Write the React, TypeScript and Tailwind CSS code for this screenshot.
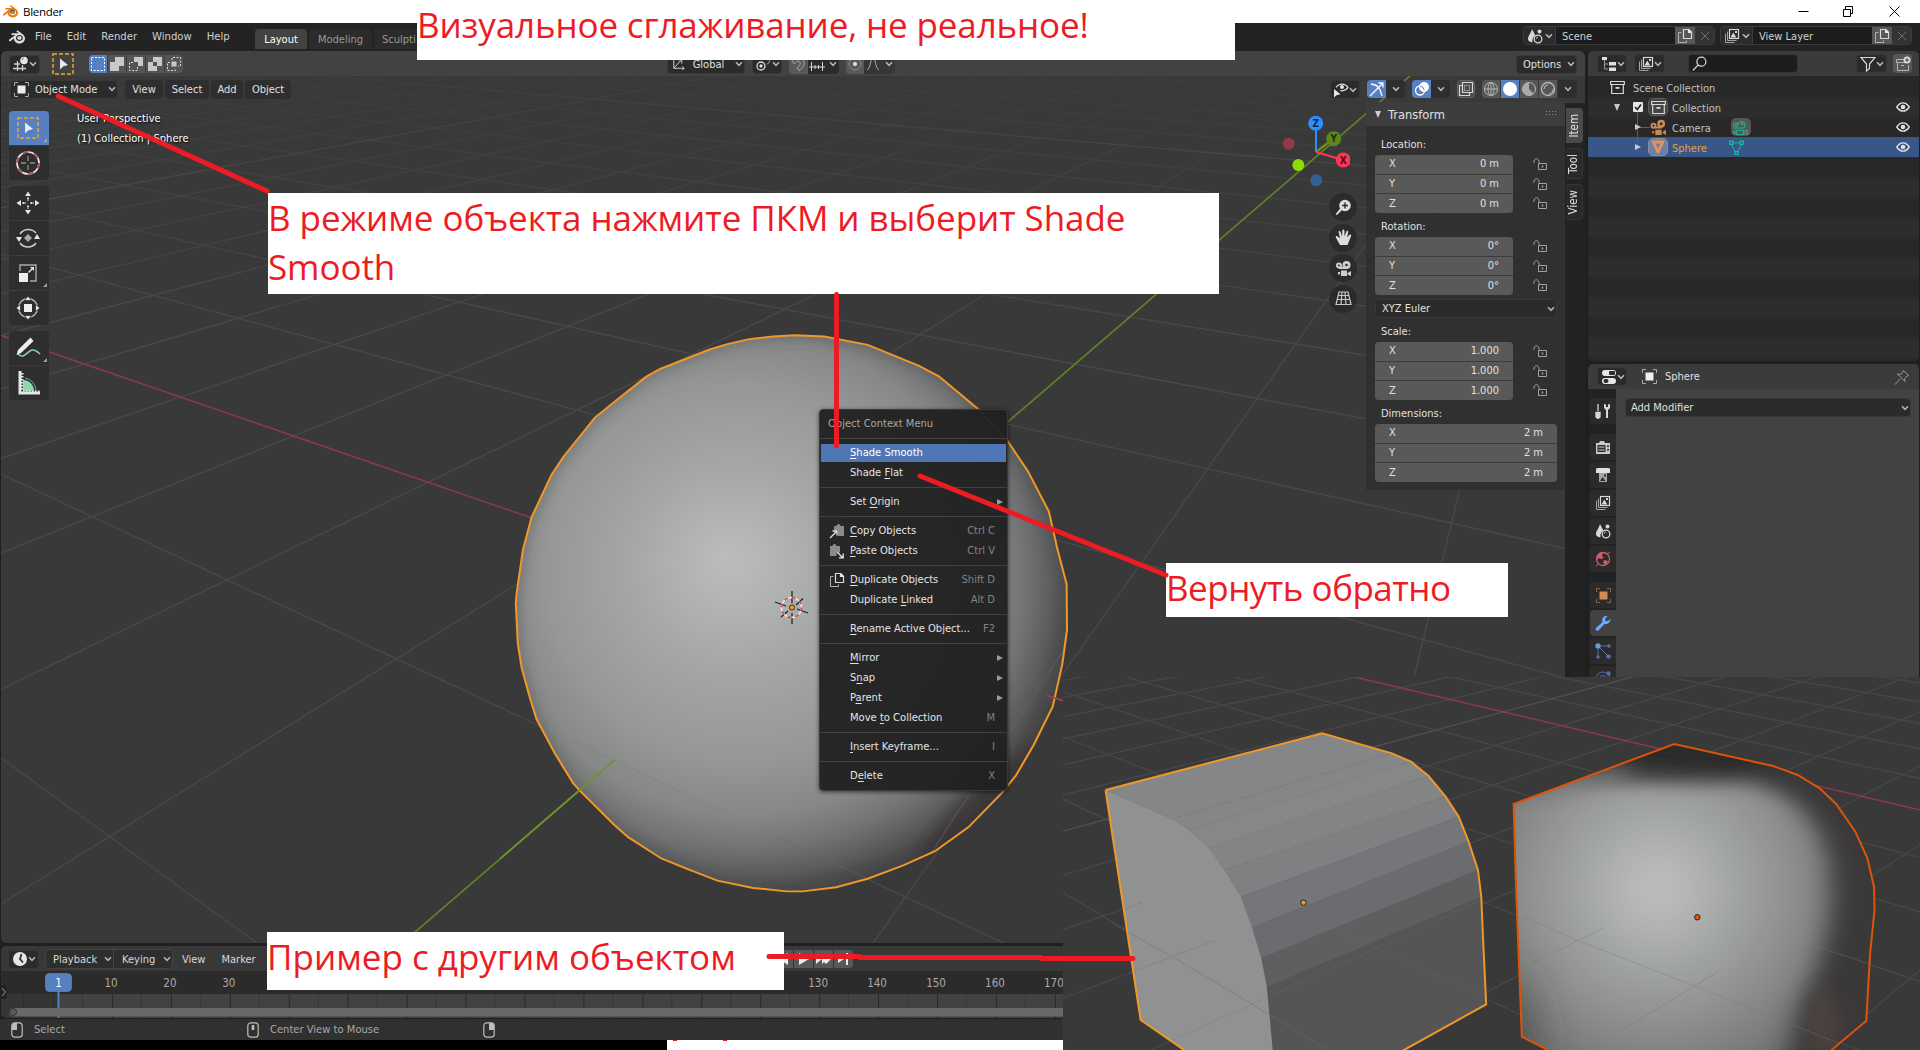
import React from "react";
import { SiBlender } from "react-icons/si";

type P = { children?: React.ReactNode; className?: string };

/* ---------- icons ---------- */

function Chev({ className = "" }: { className?: string }) {
  return (
    <svg className={`shrink-0 ${className}`} width="8" height="6" viewBox="0 0 8 6" fill="none" stroke="#b4b4b4" strokeWidth="1.6">
      <path d="M1 1.2 4 4.4 7 1.2" />
    </svg>
  );
}

function Svg({ children, size = 16, vb = 16, className = "" }: { children: React.ReactNode; size?: number; vb?: number; className?: string }) {
  return (
    <svg className={`shrink-0 ${className}`} width={size} height={size} viewBox={`0 0 ${vb} ${vb}`} fill="none" stroke="#d8d8d8" strokeWidth="1">
      {children}
    </svg>
  );
}

const ObjectIcon = ({ c = "#eeeeee", d = "#a9a9a9" }) => (
  <Svg size={15} vb={15}>
    <rect x="3.5" y="3.5" width="8" height="8" fill={c} stroke="none" />
    <path d="M.5 4V.5H4M11 .5h3.500V4M14.500 11v3.500H11M4 14.500H.5V11" stroke={d} />
  </Svg>
);
const SceneIcon = () => (
  <Svg>
    <path d="M5 1C4 5 1 8 1 11c0 2 2 3.500 4.500 3.300C5 10 7 8 8.500 7.500 7 5 6 3 5 1Z" fill="#d8d8d8" stroke="none" />
    <circle cx="12.500" cy="3.500" r="2" fill="#d8d8d8" stroke="none" />
    <circle cx="11" cy="11" r="3.800" strokeWidth="1.300" />
    <path d="M9 10.500 10.800 9" />
  </Svg>
);
const LayersIcon = () => (
  <Svg>
    <rect x="5.500" y="1.500" width="9" height="9" strokeWidth="1.200" />
    <path d="m6.500 9.500 2.800-5 3 5ZM11 3h2v2h-2z" fill="#d8d8d8" stroke="none" />
    <path d="M3.500 3.500v9h9M1.500 5.500v9h9" stroke="#a5a5a5" />
  </Svg>
);
const CopyIcon = () => (
  <Svg>
    <path d="M6.500 1.500h5l3 3v6h-8zM11.500 1.500v3h3" strokeWidth="1.200" />
    <path d="M11 1h1l3 3v1h-4z" fill="#e8e8e8" stroke="none" />
    <path d="M4.500 4.500h-3v10h8v-2" stroke="#b0b0b0" />
  </Svg>
);
const XIcon = ({ c = "#6f6f6f" }) => (
  <Svg size={10} vb={10}>
    <path d="m1 1 8 8M9 1 1 9" stroke={c} />
  </Svg>
);
const ArchiveIcon = () => (
  <Svg size={15} vb={15}>
    <path d="M.7 1.500h13.600v3H.7zM1.700 4.500v9h11.600v-9" strokeWidth="1.200" />
    <rect x="5.500" y="7" width="4" height="1.800" fill="#d8d8d8" stroke="none" />
  </Svg>
);
const MovieIcon = ({ c = "#d8d8d8", outline = false }) => (
  <Svg size={17} vb={16}>
    {outline ? (
      <g stroke={c} strokeWidth="1">
        <path d="M3.500 9A2.600 2.600 0 1 1 6 5a3.200 3.200 0 1 1 4.500 3.500H3.500M4.500 10.500h6v4h-6zM1.500 11.500h3v2h-3zM10.500 12l4-1.500v4l-4-1.500" />
        <circle cx="4" cy="6.300" r=".8" />
        <circle cx="9.500" cy="4.500" r=".8" />
      </g>
    ) : (
      <g fill={c} stroke="none">
        <path fillRule="evenodd" d="M3.300 3.500a2.800 2.800 0 1 1 0 5.600 2.800 2.800 0 0 1 0-5.600Zm0 1.900a1 1 0 1 0 0 2 1 1 0 0 0 0-2ZM10.500.8a3.700 3.700 0 1 1 0 7.400 3.700 3.700 0 0 1 0-7.400Zm0 2.400a1.300 1.300 0 1 0 0 2.600 1.300 1.300 0 0 0 0-2.600Z" />
        <path d="M4 7h7v2H4zM5 10h6v5H5zM2 11.500h2v2H2zM12 12l3-1.800V15l-3-1.500z" />
      </g>
    )}
  </Svg>
);
const EyeIcon = () => (
  <svg width="14" height="10" viewBox="0 0 14 10" className="shrink-0">
    <path d="M.8 5C3 1.600 5 .9 7 .9S11 1.600 13.200 5C11 8.400 9 9.100 7 9.100S3 8.400.8 5Z" fill="none" stroke="#e0e0e0" strokeWidth="1.400" />
    <circle cx="7" cy="5" r="2.300" fill="#e0e0e0" />
  </svg>
);
const LockIcon = () => (
  <svg width="15" height="13" viewBox="0 0 15 13" fill="none" stroke="#a2a2a2" className="shrink-0">
    <path d="M.8 4.800C.8-.6 6.200-.6 6.200 4.800M5.500 5.500h8v6h-8z" />
    <path d="M9.500 7.500v2" strokeWidth="1.400" />
  </svg>
);
const GridBallIcon = () => (
  <Svg>
    <path d="M1 8h6M0 12.500h13M4.500 5v10M9.500 9v6" stroke="#cfcfcf" strokeWidth="1.300" />
    <circle cx="11" cy="4.500" r="3.800" fill="#e6e6e6" stroke="none" />
    <path d="M9 4a2 2 0 0 1 2-2" stroke="#777" />
  </Svg>
);
const CursorBox = ({ size = 22 }) => (
  <svg width={size} height={size} viewBox="0 0 22 22" className="shrink-0">
    <rect x="1" y="1" width="20" height="20" fill="none" stroke="#f0a431" strokeWidth="1.500" strokeDasharray="4 2" />
    <path d="M8 5.500v11l3-3 5-1.500z" fill="#e9e9e9" />
  </svg>
);
const GlobeWire = () => (
  <Svg>
    <circle cx="8" cy="8" r="6.500" stroke="#b5b5b5" />
    <ellipse cx="8" cy="8" rx="3" ry="6.500" stroke="#b5b5b5" />
    <path d="M1.500 8h13M8 1.500v13" stroke="#b5b5b5" />
  </Svg>
);
const DupIcon = CopyIcon;
const ClipIcon = ({ paste = false }) => (
  <Svg>
    <path d={paste ? "M1 3h2.500a2 2 0 0 1 4 0H11v6.500H7.500V13H1z" : "M5 3h2.500a2 2 0 0 1 4 0H15v10H9V7H5z"} fill="#8b8b8b" stroke="none" />
    <path d={paste ? "M8 9l6 6M14.200 10.500v4.300H10" : "M1 15l6.500-6.500M3.500 8H8v4.500"} strokeWidth="1.300" stroke="#e6e6e6" />
  </Svg>
);

/* ---------- small pieces ---------- */

function Btn({ children, className = "" }: P) {
  return (
    <div className={`flex h-[19px] shrink-0 items-center rounded-[4px] border border-[#383838] bg-[#2b2b2b] ${className}`}>{children}</div>
  );
}

/* ---------- perspective floor grid ---------- */

type Proj = { o: [number, number]; vr: [number, number]; vg: [number, number]; a: number; b: number };

function project(p: Proj, u: number, v: number): [number, number] {
  const s = u * p.a;
  const t = v * p.b;
  const d = 1 + s + t;
  return [(p.o[0] + s * p.vr[0] + t * p.vg[0]) / d, (p.o[1] + s * p.vr[1] + t * p.vg[1]) / d];
}

function gridPath(p: Proj, list: number[], along: "u" | "v", far: number) {
  return list
    .map((k) => {
      const fixed = k * (along === "u" ? p.b : p.a);
      const step = along === "u" ? p.a : p.b;
      const near = (0.12 - 1 - fixed) / step;
      const [x1, y1] = along === "u" ? project(p, near, k) : project(p, k, near);
      const [x2, y2] = along === "u" ? project(p, far, k) : project(p, k, far);
      return `M${x1.toFixed(1)} ${y1.toFixed(1)}L${x2.toFixed(1)} ${y2.toFixed(1)}`;
    })
    .join("");
}

const range = (a: number, b: number, skip: number[]) =>
  Array.from({ length: b - a + 1 }, (_, i) => a + i).filter((n) => !skip.includes(n));

const MAIN: Proj = { o: [792, 608], vr: [-1117, -49], vg: [1599, -86], a: 0.118, b: 0.1805 };
const SIDE: Proj = { o: [1172.4, 956.7], vr: [256, 419], vg: [2585, 419], a: 0.082, b: 0.0965 };

function Viewport() {
  return (
    <svg className="absolute inset-0" width="1584" height="867" viewBox="1 76 1584 867">
      <defs>
        <linearGradient id="fade" gradientUnits="userSpaceOnUse" x1="0" y1="60" x2="0" y2="330">
          <stop offset="0" stopColor="#fff" stopOpacity=".12" />
          <stop offset=".4" stopColor="#fff" stopOpacity=".5" />
          <stop offset="1" stopColor="#fff" />
        </linearGradient>
        <mask id="m1" maskUnits="userSpaceOnUse" x="0" y="70" width="1600" height="880">
          <rect x="0" y="70" width="1600" height="880" fill="url(#fade)" />
        </mask>
        <radialGradient id="ball" gradientUnits="userSpaceOnUse" cx="640" cy="690" r="890" fx="575" fy="625">
          <stop offset="0" stopColor="#bbbdbc" />
          <stop offset=".08" stopColor="#b6b8b7" />
          <stop offset=".3" stopColor="#a5a6a7" />
          <stop offset=".55" stopColor="#969897" />
          <stop offset=".7" stopColor="#868887" />
          <stop offset=".79" stopColor="#727374" />
          <stop offset=".86" stopColor="#5b5c5d" />
          <stop offset=".93" stopColor="#414041" />
          <stop offset="1" stopColor="#373433" />
        </radialGradient>
        <filter id="soft" x="-10%" y="-10%" width="120%" height="120%">
          <feGaussianBlur stdDeviation="14" />
        </filter>
        <path
          id="rim"
          d="M690 43 745 40 820 43 930 65 1060 120 1110 147 1212 235 1285 318 1335 395 1388 500 1410 600 1433 690 1434 810 1422 900 1398 1010 1350 1110 1305 1190 1270 1235 1185 1325 1100 1388 1020 1425 930 1460 850 1482 765 1493 725 1493 640 1484 550 1465 470 1433 408 1407 325 1352 290 1320 200 1228 185 1210 140 1135 92 1042 75 985 55 910 45 845 40 740 42 715 58 600 80 515 130 405 160 358 240 255 300 205 370 148 405 128 530 77 575 63 630 50Z"
        />
        <clipPath id="rimClip">
          <use href="#rim" />
        </clipPath>
      </defs>
      <g mask="url(#m1)" fill="none" stroke="#494949" strokeWidth="1.300">
        <path d={gridPath(MAIN, range(-4, 24, [0, 10]), "u", 60)} />
        <path d={gridPath(MAIN, range(-7, 36, [0, 10]), "v", 60)} />
        <path stroke="#565656" d={gridPath(MAIN, [10, 20], "u", 60) + gridPath(MAIN, [10, 20], "v", 60)} />
      </g>
      <path d="M0 335 1063 700.700" stroke="#8c3a49" strokeWidth="1.500" />
      <path d="M1411 75 400 945" stroke="#5f8226" strokeWidth="1.700" />
      <g transform="translate(500 320) scale(.3954 .3827)">
        <use href="#rim" fill="url(#ball)" />
        <g clipPath="url(#rimClip)">
          <use href="#rim" fill="none" stroke="#4b4a49" strokeOpacity=".45" strokeWidth="20" filter="url(#soft)" />
          <ellipse cx="1240" cy="1290" rx="260" ry="80" fill="#2f2a28" fillOpacity=".4" transform="rotate(-45 1240 1290)" filter="url(#soft)" />
          <path d="M1420 870 980 1568" stroke="#6b6866" strokeOpacity=".5" strokeWidth="3" />
          <path d="M120 1070 660 1330" stroke="#808281" strokeOpacity=".6" strokeWidth="3" />
          <path d="M700 1350 960 1475" stroke="#6a6a6a" strokeOpacity=".4" strokeWidth="3" />
        </g>
        <use href="#rim" fill="none" stroke="#ef972b" strokeWidth="5.200" />
      </g>
      <path d="M500 858.800 614.700 759.700" stroke="#6d942b" strokeWidth="1.700" />
      <path d="m1047 695.500 17 5.500" stroke="#a2414f" strokeWidth="1.400" />
      <g fill="none" strokeWidth="1.300">
        <path d="M792 591v12M792 613v11M775 602l11 4M797 609l11 4M781 617l7-6M796 605l7-6.500" stroke="#222" />
        <circle cx="791.500" cy="607.500" r="10" stroke="#e9e9e9" strokeWidth="1.500" />
        <circle cx="791.500" cy="607.500" r="10" stroke="#d33" strokeWidth="1.500" strokeDasharray="3.900 3.950" />
      </g>
      <circle cx="792" cy="607.500" r="2.600" fill="#f59b25" stroke="#3a2a10" />
    </svg>
  );
}

function Gizmo() {
  return (
    <svg className="absolute left-[1279px] top-[34px]" width="70" height="84" viewBox="1280 110 70 84" fontFamily="DejaVu Sans, sans-serif" fontSize="10" fontWeight="bold" textAnchor="middle">
      <circle cx="1288.700" cy="143.700" r="6" fill="#933a48" />
      <circle cx="1316.300" cy="180.300" r="6" fill="#316093" />
      <path d="m1316 152 17-13" stroke="#66911c" strokeWidth="2.500" />
      <circle cx="1333.700" cy="138.700" r="7.500" fill="#5f861b" />
      <path d="m1316 152 27 8" stroke="#ff3653" strokeWidth="2" />
      <path d="M1316 152v-28" stroke="#2b8fff" strokeWidth="2" />
      <circle cx="1343.300" cy="160" r="7.500" fill="#ff3653" />
      <circle cx="1315.700" cy="123.300" r="7.500" fill="#2b8fff" />
      <circle cx="1298.300" cy="165" r="6" fill="#8bdc00" />
      <text x="1343.300" y="163.600" fill="#45101a">X</text>
      <text x="1333.700" y="142.300" fill="#20300a">Y</text>
      <text x="1315.700" y="127" fill="#0c2b4d">Z</text>
    </svg>
  );
}

function NavButtons() {
  const icons = [
    <g key="z" fill="#dcdcdc" stroke="none">
      <circle cx="10" cy="6.500" r="5.800" />
      <path d="m5.500 9 1.800 1.800L2 16l-1.500-.8z" />
      <path d="M7 6.500h6M10 3.500v6" stroke="#2a2a2a" strokeWidth="1.400" />
    </g>,
    <path key="h" d="M5 16 .8 8.500c-.5-1.500 1.200-2 2-1L5 9.500 3.600 3.300c-.2-1.500 1.600-1.800 2-.4L7 7.500 7.300 1.500c.2-1.500 2-1.500 2.100 0L9.600 7.500l1.700-5c.5-1.300 2.200-.9 1.900.5L12 8.500l2.400-2.700c1-.9 2.300.2 1.700 1.300L12.500 16z" fill="#dcdcdc" stroke="none" />,
    <g key="c" fill="#cfcfcf" stroke="none">
      <path fillRule="evenodd" d="M4 2.500a3 3 0 1 1 0 6 3 3 0 0 1 0-6Zm0 2a1 1 0 1 0 0 2 1 1 0 0 0 0-2ZM11.500 1a4 4 0 1 1 0 8 4 4 0 0 1 0-8Zm0 2.700a1.300 1.300 0 1 0 0 2.600 1.300 1.300 0 0 0 0-2.600Z" />
      <path d="M4 7h8v2H4zM6 10.500h6v5.500H6zM3 12h2v2.500H3zM12.500 13 16 11v5l-3.500-1.500z" />
    </g>,
    <path key="g" d="M4 2h9l3 12.500H1zM3.200 5.500h10.500M2.200 9.500h12.700M7 2l-1 12.500M10 2l1 12.500" stroke="#c6c6c6" strokeWidth="1.200" />,
  ];
  return (
    <div className="absolute left-[1328px] top-[117px] flex flex-col gap-[2.500px]">
      {icons.map((ic, i) => (
        <div key={i} className="flex size-7 items-center justify-center rounded-full bg-[#2a2a2a]/90">
          <Svg size={17} vb={17}>{ic}</Svg>
        </div>
      ))}
    </div>
  );
}

/* ---------- left toolbar ---------- */

function ToolBtn({ children, active = false, more = false }: P & { active?: boolean; more?: boolean }) {
  return (
    <div className={`relative flex h-[34px] w-10 items-center justify-center pr-[2px] ${active ? "bg-[#5680c2]" : "bg-[#2e2e2e]"}`}>
      {children}
      {more && <span className="absolute bottom-[3px] right-[2px] border-b-4 border-l-4 border-b-[#a0a0a0] border-l-transparent" />}
    </div>
  );
}

function Toolbar() {
  return (
    <div className="absolute left-2 top-[35px] flex w-10 flex-col gap-[6px]">
      <div className="flex flex-col gap-px overflow-hidden rounded-[4px]">
        <ToolBtn active more><CursorBox /></ToolBtn>
        <ToolBtn>
          <Svg size={26} vb={26}>
            <circle cx="13" cy="13" r="11" stroke="#e6e6e6" strokeWidth="1.700" />
            <circle cx="13" cy="13" r="11" stroke="#b5494f" strokeWidth="1.700" strokeDasharray="5.700 5.820" />
            <path d="M6 13h5M15 13h5M13 6v5M13 15v5" stroke="#8f8f8f" strokeWidth="1.300" />
          </Svg>
        </ToolBtn>
      </div>
      <div className="flex flex-col gap-px overflow-hidden rounded-[4px]">
        <ToolBtn>
          <Svg size={24} vb={24}>
            <path d="M12 .5 15 5H9zM12 23.500 9 19h6zM.5 12 5 9v6zM23.500 12 19 15V9z" fill="#e6e6e6" stroke="none" />
            <path d="M12 6.500v3M12 14.500v3M6.500 12h3M14.500 12h3" strokeWidth="1.800" stroke="#e6e6e6" strokeDasharray="1.500 .5" />
          </Svg>
        </ToolBtn>
        <ToolBtn>
          <Svg size={24} vb={24}>
            <path d="M4 8A10 10 0 0 1 20 7M20 17A10 10 0 0 1 4 17" strokeWidth="1.500" stroke="#cfcfcf" />
            <path d="M0 11h6l-3 5zM18 13h6l-3-5z" fill="#e6e6e6" stroke="none" />
            <path d="m12 8 4 4-4 4-4-4z" fill="#a9a9a9" stroke="none" />
          </Svg>
        </ToolBtn>
        <ToolBtn more>
          <Svg size={20} vb={20}>
            <path d="M2 8V2h16v16h-6" strokeWidth="1.400" stroke="#a9a9a9" />
            <rect x="1" y="10" width="9" height="9" fill="#eee" stroke="none" />
            <path d="m10.500 9.500 4-4" stroke="#e6e6e6" strokeWidth="1.500" />
            <path d="M12 4h4v4z" fill="#e6e6e6" stroke="none" />
          </Svg>
        </ToolBtn>
        <ToolBtn>
          <Svg size={24} vb={24}>
            <circle cx="12" cy="12" r="9.500" strokeWidth="1.300" stroke="#bdbdbd" />
            <rect x="8" y="8" width="8" height="8" fill="#eee" stroke="none" />
            <path d="m12 0 3.500 4.500h-7zM12 24l-3.500-4.500h7zM0 12l4.500-3.500v7zM24 12l-4.500 3.500v-7z" fill="#e6e6e6" stroke="#2e2e2e" strokeWidth=".8" />
          </Svg>
        </ToolBtn>
      </div>
      <div className="flex flex-col gap-px overflow-hidden rounded-[4px]">
        <ToolBtn more>
          <Svg size={26} vb={26}>
            <path d="M3 19c6 6 9-3 14-4 4-.6 5 2 8 4" stroke="#7fd0a3" strokeWidth="1.600" />
            <path d="M15.500 2.500 18.500 6 6 18l-4.500 2 1.500-5z" fill="#ededed" stroke="none" />
          </Svg>
        </ToolBtn>
        <ToolBtn>
          <Svg size={26} vb={26}>
            <path d="M8 21V10a11 11 0 0 1 11 11z" fill="#8fd8ae" stroke="none" />
            <path d="M10 8a13 13 0 0 1 11 13" stroke="#6db48c" />
            <path d="M5 1v22h20" stroke="#e6e6e6" strokeWidth="3" />
            <path d="M7 3v18" stroke="#e6e6e6" strokeWidth="3" strokeDasharray="1.500 1.500" />
            <path d="M8 21.500h17" stroke="#e6e6e6" strokeWidth="2" strokeDasharray="1.500 1.500" />
          </Svg>
        </ToolBtn>
      </div>
    </div>
  );
}

/* ---------- transform panel ---------- */

function Label({ children }: P) {
  return <div className="flex h-6 items-center pl-[6px] pt-[2px]">{children}</div>;
}

function Fields({ values, lock = true }: { values: string[]; lock?: boolean }) {
  return (
    <div className="flex h-[58px]">
      <div className={`flex flex-col gap-px overflow-hidden rounded-[4px] bg-[#3c3c3c] ${lock ? "w-[138px]" : "w-[182px]"}`}>
        {values.map((v, i) => (
          <div key={i} className="flex flex-1 items-center justify-between bg-[#595959] pb-px pl-[14px] pr-[14px]">
            <span>{"XYZ"[i]}</span>
            <span>{v}</span>
          </div>
        ))}
      </div>
      {lock && (
        <div className="ml-[20px] flex flex-col gap-[6.500px] pt-[3px]">
          {values.map((_, i) => (
            <LockIcon key={i} />
          ))}
        </div>
      )}
    </div>
  );
}

function TransformPanel() {
  return (
    <div className="absolute left-[1365px] top-[26px] h-[388px] w-[199px] bg-[#303030]/90">
      <div className="flex h-6 items-center bg-[#3d3d3d] pl-[9px] pr-[8px]">
        <span className="border-x-[3.500px] border-t-[7px] border-x-transparent border-t-[#cfcfcf]" />
        <span className="ml-[7px] pt-[2px] text-[12.800px]">Transform</span>
        <svg className="ml-auto" width="11" height="6" fill="#8a8a8a">
          {[0, 3, 6, 9].map((x) => (
            <g key={x}>
              <rect x={x} y="0" width="1" height="1" />
              <rect x={x} y="3" width="1" height="1" />
            </g>
          ))}
        </svg>
      </div>
      <div className="pl-[9px] pt-[5px]">
        <Label>Location:</Label>
        <Fields values={["0 m", "0 m", "0 m"]} />
        <Label>Rotation:</Label>
        <Fields values={["0°", "0°", "0°"]} />
        <Btn className="mt-1 h-[18px] w-[182px] justify-between pl-[6px] pr-[1px]">
          XYZ Euler <Chev />
        </Btn>
        <Label>Scale:</Label>
        <Fields values={["1.000", "1.000", "1.000"]} />
        <Label>Dimensions:</Label>
        <Fields lock={false} values={["2 m", "2 m", "2 m"]} />
      </div>
    </div>
  );
}

function SideTabs() {
  const tab = "flex w-[17px] items-center justify-center rounded-r-[4px] text-[11.500px]";
  const t = "rotate-180 [writing-mode:vertical-rl]";
  return (
    <div className="absolute bottom-0 right-0 top-[27px] flex w-5 flex-col gap-[5px] bg-[#232323] pl-px pt-[5px]">
      <div className={`${tab} h-[35px] bg-[#4a4a4a]`}><span className={t}>Item</span></div>
      <div className={`${tab} h-[31px] border border-l-0 border-[#363636] bg-[#292929]`}><span className={t}>Tool</span></div>
      <div className={`${tab} h-[36px] border border-l-0 border-[#363636] bg-[#292929]`}><span className={t}>View</span></div>
    </div>
  );
}

/* ---------- context menu ---------- */

type Item = { label: string; hot?: string; sub?: boolean; icon?: React.ReactNode; active?: boolean } | null;

const MENU: Item[] = [
  { label: "_Shade Smooth", active: true },
  { label: "Shade _Flat" },
  null,
  { label: "Set _Origin", sub: true },
  null,
  { label: "_Copy Objects", hot: "Ctrl C", icon: <ClipIcon /> },
  { label: "_Paste Objects", hot: "Ctrl V", icon: <ClipIcon paste /> },
  null,
  { label: "_Duplicate Objects", hot: "Shift D", icon: <DupIcon /> },
  { label: "Duplicate _Linked", hot: "Alt D" },
  null,
  { label: "_Rename Active Object...", hot: "F2" },
  null,
  { label: "_Mirror", sub: true },
  { label: "S_nap", sub: true },
  { label: "P_arent", sub: true },
  { label: "Move _to Collection", hot: "M" },
  null,
  { label: "_Insert Keyframe...", hot: "I" },
  null,
  { label: "D_elete", hot: "X" },
];

function Sep() {
  return (
    <div className="h-[9px] pt-1">
      <div className="h-px bg-[#414141]" />
    </div>
  );
}

function ContextMenu() {
  return (
    <div className="absolute left-[819px] top-[409px] h-[382px] w-[189px] rounded-[4px] border border-[#3a3a3a] bg-[#202020]/95 pt-1 text-[11.080px] shadow-[0_1px_4px_rgba(0,0,0,0.6)]">
      <div className="flex h-5 items-center pl-2 text-[#a5a5a5]">Object Context Menu</div>
      <Sep />
      {MENU.map((m, i) => {
        if (!m) return <Sep key={i} />;
        const k = m.label.indexOf("_");
        return (
          <div key={i} className={`mx-px flex h-5 items-center border-b border-t border-transparent bg-clip-padding pl-[8px] ${m.active ? "bg-[#5077b5] text-white" : "text-[#e4e4e4]"}`}>
            <span className="mr-[5px] flex w-4">{m.icon}</span>
            <span className="whitespace-pre">
              {m.label.slice(0, k)}
              <span className="underline decoration-1 underline-offset-2">{m.label[k + 1]}</span>
              {m.label.slice(k + 2)}
            </span>
            {m.hot && <span className="ml-auto mr-[11px] text-[#838383]">{m.hot}</span>}
            {m.sub && <span className="ml-auto mr-[3px] border-y-[3.500px] border-l-[6px] border-y-transparent border-l-[#9a9a9a]" />}
          </div>
        );
      })}
    </div>
  );
}

/* ---------- top bars ---------- */

function TitleBar() {
  return (
    <div className="flex h-[23px] items-center bg-white pl-[3px] text-black">
      <span className="relative flex">
        <span className="absolute left-[7px] top-[5px] size-[5px] rounded-full bg-[#265787]" />
        <SiBlender className="relative size-[15px] text-[#e87d0d]" />
      </span>
      <span className="ml-[5px] font-['Open_Sans',sans-serif] text-[11.500px] tracking-[-0.300px] [font-stretch:normal]">Blender</span>
      <svg className="ml-auto mr-[19px]" width="103" height="11" viewBox="0 0 103 11" fill="none" stroke="#000">
        <path d="M.5 5.500h10M45.500 3.500h7v7h-7zM47.500 3.500v-3h7v7h-2M91.500.5l10 10M101.500.5l-10 10" />
      </svg>
    </div>
  );
}

function DataBlock({ icon, name, className = "" }: { icon: React.ReactNode; name: string; className?: string }) {
  return (
    <div className={`flex h-[19px] items-stretch overflow-hidden rounded-[4px] border border-[#3c3c3c] ${className}`}>
      <div className="flex w-[31px] items-center justify-between bg-[#2b2b2b] pl-[3px] pr-[2px]">{icon}<Chev /></div>
      <div className="flex w-[120px] items-center border-l border-[#3c3c3c] bg-[#1c1c1c] pl-[6px] pt-px">{name}</div>
      <div className="flex w-[20px] items-center justify-center bg-[#575757]"><CopyIcon /></div>
      <div className="flex w-[19px] items-center justify-center bg-[#333]"><XIcon /></div>
    </div>
  );
}

function TopBar() {
  return (
    <div className="flex h-[28px] bg-[#232323] text-[#d0d0d0]">
      <SiBlender className="ml-[9px] mt-[6px] size-[16px] shrink-0 text-[#dcdcdc]" />
      <div className="ml-[10px] flex h-[26px] w-[220px] items-center gap-[15px] pt-px text-[11.200px]">
        {["File", "Edit", "Render", "Window", "Help"].map((t) => (
          <span key={t}>{t}</span>
        ))}
      </div>
      <div className="flex items-end gap-[2px] pb-[2px]">
        <span className="flex h-5 w-[52px] items-center justify-center rounded-t-[4px] bg-[#424242] pt-px text-white">Layout</span>
        <span className="flex h-5 w-[63px] items-center justify-center rounded-t-[4px] bg-[#2b2b2b] pt-px text-[#999]">Modeling</span>
        <span className="flex h-5 w-[43px] items-center overflow-hidden rounded-tl-[4px] bg-[#2b2b2b] pl-2 pt-px text-[#999]">Sculpti</span>
      </div>
      <div className="ml-auto mr-2 flex gap-[5px] pt-[3px]">
        <DataBlock icon={<SceneIcon />} name="Scene" />
        <DataBlock icon={<LayersIcon />} name="View Layer" />
      </div>
    </div>
  );
}

function SelectModes() {
  const base = "flex h-[18px] w-[18px] items-center justify-center";
  const c = "#c9c9c9";
  return (
    <div className="ml-[15px] flex gap-px overflow-hidden rounded-[4px] bg-[#3a3a3a]">
      <div className={`${base} bg-[#5680c2]`}><Svg><rect x="1.500" y="1.500" width="13" height="13" stroke="#fff" strokeDasharray="2 1.500" /></Svg></div>
      <div className={`${base} bg-[#555]`}><Svg><path d="M6 1h9v9h-5v5H1V6h5z" fill={c} stroke="none" /></Svg></div>
      <div className={`${base} bg-[#555]`}><Svg><path d="M6 1h9v9h-5V6H6z" fill={c} stroke="none" /><path d="M5 6.500H1.500v8h8V11" strokeDasharray="2 1.500" /></Svg></div>
      <div className={`${base} bg-[#555]`}><Svg><path fillRule="evenodd" d="M6 1h9v9h-5v5H1V6h5zM6 6v4h4V6z" fill={c} stroke="none" /></Svg></div>
      <div className={`${base} bg-[#555]`}><Svg><rect x="5.500" y="5.500" width="5" height="5" fill={c} stroke="none" /><path d="M6 4V1.500h8.500v8.500H12M4 6.500H1.500v8h8V12" strokeDasharray="2 1.500" /></Svg></div>
    </div>
  );
}

function ToolHeader() {
  return (
    <div className="flex h-[25px] items-center rounded-t-[5px] bg-[#424242] pl-2 pr-2 pt-px">
      <Btn className="w-[31px] justify-between pl-[3px] pr-[2px]"><GridBallIcon /><Chev /></Btn>
      <div className="ml-3 flex"><CursorBox /></div>
      <SelectModes />
      <div className="ml-[484px] flex items-center gap-[7px]">
        <Btn className="w-[78px] justify-between pl-[3px] pr-[1px]">
          <Svg size={15} vb={16}><path d="M3 1v11h11M3 12l8-9M1 3l2-2 2 2M12 10l2 2-2 2M7.500 3h4v4" /></Svg>
          <span className="-translate-x-[2px]">Global</span>
          <Chev />
        </Btn>
        <Btn className="w-[30px] justify-between pl-[2px] pr-[1px]">
          <Svg><circle cx="6" cy="10" r="4" strokeWidth="1.300" /><circle cx="6" cy="10" r="1.200" fill="#fff" /><path d="M11 2a3 3 0 1 1 1 6" stroke="#999" /></Svg>
          <Chev />
        </Btn>
        <div className="flex h-[19px] overflow-hidden rounded-[4px]">
          <span className="flex w-[19px] items-center justify-center bg-[#595959]"><Svg><path d="M1.500 6A6 6 0 0 1 11 3c4 4 2 8-3 11.500l-2-2.500c3-2 4-4.500 2.500-6.200C7 4.500 5 5.500 3.500 8z" stroke="#aaa" /></Svg></span>
          <span className="flex w-[31px] items-center justify-between bg-[#2b2b2b] pl-px pr-[2px]"><Svg><path d="M2.500 6v9M6 9v4M9.500 9v4M13.500 6v9M0 11h16" /></Svg><Chev /></span>
        </div>
        <div className="flex h-[19px] overflow-hidden rounded-[4px]">
          <span className="flex w-[18px] items-center justify-center bg-[#595959]"><Svg><circle cx="8" cy="8" r="6" stroke="#888" /><circle cx="8" cy="8" r="1.700" fill="#ddd" /></Svg></span>
          <span className="flex w-[31px] items-center justify-between bg-[#363636] pl-px pr-[2px]"><Svg><path d="M2 14C6 12 5 2 8 2s2 10 6 12" stroke="#aaa" /></Svg><Chev /></span>
        </div>
      </div>
      <Btn className="ml-auto w-[61px] justify-between pl-[6px] pr-[1px]">Options <Chev /></Btn>
    </div>
  );
}

function ModeHeader() {
  const on = "flex w-[19px] items-center justify-center bg-[#5680c2]";
  const off = "flex w-[18px] items-center justify-center bg-[#575757]";
  const drop = "flex w-[19px] items-center justify-center bg-[#2e2e2e]";
  const text = "flex h-[19px] items-center justify-center rounded-[4px] bg-[#2e2e2e]";
  return (
    <div className="absolute inset-x-0 top-[4px] flex h-[18px] items-center pl-[9px] pr-[8px]">
      <Btn className="h-[18px] w-[108px] pl-[3px] pr-[1px]">
        <ObjectIcon />
        <span className="ml-[6px]">Object Mode</span>
        <Chev className="ml-auto" />
      </Btn>
      <div className="ml-[7px] flex gap-[2px]">
        <span className={`${text} w-[38px]`}>View</span>
        <span className={`${text} w-[44px]`}>Select</span>
        <span className={`${text} w-[32px]`}>Add</span>
        <span className={`${text} w-[46px]`}>Object</span>
      </div>
      <div className="ml-auto flex h-[18px] gap-[7px]">
        <Btn className="h-[18px] w-[30px] justify-between pl-[2px] pr-[2px]">
          <Svg><path d="M1 7v8.500l2.500-2.300 4-1z" fill="#e6e6e6" stroke="none" /><path d="M3 5.500C6 1 12 1 15 5.500 12 9.500 8 9 7 8.500" strokeWidth="1.300" /><circle cx="9" cy="5" r="2" fill="#e6e6e6" stroke="none" /></Svg>
          <Chev />
        </Btn>
        <div className="flex overflow-hidden rounded-[4px]">
          <span className={on}><Svg><path d="M2 3c8 1 9 5 11 12M1 15 13 3M9.500 2H14v4.500" stroke="#fff" strokeWidth="1.300" /></Svg></span>
          <span className={drop}><Chev /></span>
        </div>
        <div className="flex overflow-hidden rounded-[4px]">
          <span className={on}><Svg><circle cx="6" cy="9.500" r="4.500" stroke="#fff" strokeWidth="1.300" /><circle cx="10" cy="6" r="5" fill="#fff" stroke="none" /><path d="M6 5.200A4.500 4.500 0 0 1 10.300 9" stroke="#5680c2" /></Svg></span>
          <span className={drop}><Chev /></span>
        </div>
        <div className="flex w-[18px] items-center justify-center rounded-[4px] border border-[#666] bg-[#4a4a4a]">
          <Svg><path d="M4.500 1.500h10v10h-10zM4 4.500H1.500v10h10V12" strokeWidth="1.200" /><path d="M6.500 4.500h5v5h-5z" strokeDasharray="1 1" /></Svg>
        </div>
        <div className="flex gap-px overflow-hidden rounded-[4px]">
          <span className={off}><GlobeWire /></span>
          <span className="flex w-[18px] items-center justify-center bg-[#5680c2]"><Svg><circle cx="8" cy="8" r="7" fill="#fff" stroke="none" /></Svg></span>
          <span className={off}><Svg><circle cx="8" cy="8" r="6.500" stroke="#bbb" /><path d="M8 8V1.500A6.500 6.500 0 0 0 1.500 8a6.500 6.500 0 0 0 11 4.700z" fill="#aaa" stroke="none" /></Svg></span>
          <span className={off}><Svg><circle cx="8" cy="8" r="6.500" stroke="#bbb" strokeWidth="1.300" /><path d="M4 8a4 4 0 0 1 4-4M9 13c2-.5 4-2 4.300-5" stroke="#bbb" /></Svg></span>
          <span className={drop}><Chev /></span>
        </div>
      </div>
    </div>
  );
}

/* ---------- outliner ---------- */

function Row({ children, className = "" }: P) {
  return <div className={`flex h-5 shrink-0 items-center ${className}`}>{children}</div>;
}

const Tri = () => (
  <svg width="6" height="6" viewBox="0 0 6 6" className="relative shrink-0">
    <path d="M0 0v6l6-3z" fill="#c9c9c9" />
  </svg>
);

function Outliner() {
  return (
    <div className="flex h-[310px] flex-col overflow-hidden rounded-[5px] bg-[#282828] text-[#c3c3c3]">
      <div className="flex h-[25px] shrink-0 items-center bg-[#3b3b3b] pl-[9px]">
        <Btn className="w-[30px] justify-between pl-[3px] pr-[2px]">
          <Svg><path d="M1 1h5v3H1zM8 6h7v3.500H8zM8 11.500h7V15H8z" fill="#e0e0e0" stroke="none" /><path d="M3.500 4v9H7M3.500 8H7" stroke="#999" /></Svg>
          <Chev />
        </Btn>
        <Btn className="ml-[7px] w-[31px] justify-between pl-[3px] pr-[2px]"><LayersIcon /><Chev /></Btn>
        <div className="ml-[23px] flex h-[19px] w-[110px] items-center rounded-[4px] border border-[#343434] bg-[#1d1d1d] pl-[3px]">
          <Svg size={15}><circle cx="10" cy="6" r="4.800" strokeWidth="1.300" /><path d="m6.500 9.500-5.500 6" strokeWidth="1.300" /></Svg>
        </div>
        <Btn className="ml-[58px] w-[31px] justify-between pl-[3px] pr-[2px]">
          <Svg><path d="M1 1.500h14L9.500 8v4.500L6.500 15V8z" strokeWidth="1.200" /></Svg>
          <Chev />
        </Btn>
        <div className="ml-[6px] flex size-[19px] items-center justify-center rounded-[4px] bg-[#575757]">
          <Svg><path d="M9 3.500H1.500v3H11M2.500 6.500v8h11V9M6 9.500h3" stroke="#b5b5b5" /><circle cx="12" cy="4" r="3.500" fill="#ddd" stroke="none" /><path d="M10 4h4M12 2v4" stroke="#444" /></Svg>
        </div>
      </div>
      <div className="flex h-[21px] shrink-0 items-center pl-[22px] pt-[2px]"><ArchiveIcon /><span className="ml-[8px] pt-px">Scene Collection</span></div>
      <Row className="bg-[#2d2d2d] pl-[26px] pr-[9px]">
        <span className="border-x-[3px] border-t-[7px] border-x-transparent border-t-[#c9c9c9]" />
        <svg className="ml-[13px]" width="10" height="10"><rect width="10" height="10" rx="1" fill="#e6e6e6" /><path d="m2 5 2.300 2.500L8 2.500" stroke="#222" strokeWidth="1.700" fill="none" /></svg>
        <span className="ml-[5px] flex h-[18px] w-5 items-center justify-center rounded-[5px] border border-[#5c5c5c] bg-[#454545]"><ArchiveIcon /></span>
        <span className="ml-1 pt-[2px]">Collection</span>
        <span className="ml-auto"><EyeIcon /></span>
      </Row>
      <Row className="relative pl-[47px] pr-[9px]">
        <span className="absolute left-[49px] top-[-5px] h-[36px] w-px bg-[#5e5e5e]" />
        <span className="absolute left-[49px] top-[10px] h-px w-[13px] bg-[#5e5e5e]" />
        <Tri />
        <span className="ml-[9px] flex"><MovieIcon c="#c98953" /></span>
        <span className="ml-[5px] pt-[2px]">Camera</span>
        <span className="ml-[20px] flex h-[18px] w-5 items-center justify-center rounded-[5px] bg-[#575757]"><MovieIcon c="#1cb292" outline /></span>
        <span className="ml-auto"><EyeIcon /></span>
      </Row>
      <Row className="bg-[#395689] pl-[47px] pr-[9px]">
        <Tri />
        <span className="ml-[7px] flex h-[18px] w-5 items-center justify-center rounded-[5px] border border-[#8290ab] bg-[#6f7f9f]">
          <Svg><path fillRule="evenodd" d="M1 1.500h14L9 14.500H7zM5.500 4.500 8 10l2.500-5.500z" fill="#dd9363" stroke="none" /></Svg>
        </span>
        <span className="ml-1 pt-[2px] text-[#e8a13d]">Sphere</span>
        <span className="ml-[22px] flex"><Svg size={15}><path d="M3 3h10M2.500 4.500 7 13M13.500 4.500 9 13" stroke="#13c0a0" /><path d="M.8 1.300h3.400v3.400H.8zM11.800 1.300h3.400v3.400h-3.400zM6.300 12.300h3.400v3.400H6.300z" stroke="#13c0a0" strokeWidth="1.300" fill="#395689" /></Svg></span>
        <span className="ml-auto"><EyeIcon /></span>
      </Row>
      <div className="flex-1 bg-[repeating-linear-gradient(#282828_0_20px,#2d2d2d_20px_40px)]" />
    </div>
  );
}

/* ---------- properties ---------- */

const PROP_ICONS: React.ReactNode[] = [
  <Svg key="0"><path d="M3 1v7M1 9.500h4V14l-2 1.500L1 14z" fill="#d8d8d8" strokeWidth="1.300" /><path d="M9 1v4l2 2v8h2V7l2-2V1l-2 .5V4h-2V1.500z" fill="#d8d8d8" stroke="none" /></Svg>,
  <Svg key="1"><path fillRule="evenodd" d="M1 4h3l1-2h4l1 2h5v11H1zM2.500 6v7h8V6z" fill="#c9c9c9" stroke="none" /><path d="M3.500 8h6M3.500 11h6" stroke="#9a9a9a" strokeWidth="1.500" /><path d="M13 6.500v1.500M13 10v1.500" stroke="#2b2b2b" strokeWidth="2" /></Svg>,
  <Svg key="2"><path d="M1 2.500Q1 1 2.500 1h11Q15 1 15 2.500V6H1z" fill="#e0e0e0" stroke="none" /><path d="M4 6h8v9H4z" fill="#a5a5a5" stroke="none" /><path d="m5 14 2.500-4 3 4zM9 7.500h2v2H9z" fill="#2b2b2b" stroke="none" /></Svg>,
  <LayersIcon key="3" />,
  <SceneIcon key="4" />,
  <Svg key="5"><circle cx="8" cy="8" r="6.500" stroke="#c9606a" strokeWidth="1.300" /><path d="M2 5c2-4 6-4 6-3L7 5 9 7 6 8 4 7 2 9zM9 9l4 1-2 4-3-2z" fill="#c9606a" stroke="none" /><path d="M12 3l3-2M1 15l2.500-2" stroke="#c9606a" /></Svg>,
  <ObjectIcon key="6" c="#cf8b52" d="#8e6544" />,
  <Svg key="7"><path d="M1 13 7.500 7A4.300 4.300 0 0 1 12.500 1L10 4l.5 2L13 6l2.300-2A4.500 4.500 0 0 1 9.500 9L3.500 15.500A1.800 1.800 0 0 1 1 13Z" fill="#6da7ff" stroke="none" /></Svg>,
  <Svg key="8"><circle cx="3" cy="3" r="2.700" fill="#6f9bdb" stroke="none" /><path d="M5 3h9M3 5v9M5 5l8 8" stroke="#55749f" /><circle cx="14" cy="3" r="1.700" fill="#55749f" stroke="none" /><circle cx="3" cy="14" r="1.700" fill="#55749f" stroke="none" /><circle cx="13.500" cy="13.500" r="2.300" fill="#55749f" stroke="none" /></Svg>,
  <Svg key="9"><circle cx="8" cy="8" r="7" stroke="#55749f" /><circle cx="8" cy="8" r="3.500" stroke="#55749f" /><circle cx="13.500" cy="2.500" r="2.200" fill="#55749f" stroke="none" /></Svg>,
];

function Properties() {
  return (
    <div className="mt-[3px] flex flex-1 flex-col overflow-hidden rounded-t-[5px]">
      <div className="flex h-[25px] shrink-0 items-center bg-[#3b3b3b] pl-[9px] pr-[9px]">
        <Btn className="w-[30px] justify-between pl-[3px] pr-[2px]">
          <Svg><rect x="1" y="1" width="14" height="6" rx="3" fill="#e6e6e6" stroke="none" /><rect x="8" y="2" width="6" height="4" rx="1" fill="#2b2b2b" stroke="none" /><rect x="1" y="9" width="14" height="6" rx="3" fill="#e6e6e6" stroke="none" /><rect x="2.500" y="10" width="5" height="4" rx="2" fill="#2b2b2b" stroke="none" /></Svg>
          <Chev />
        </Btn>
        <span className="ml-[15px] flex"><ObjectIcon /></span>
        <span className="ml-[8px]">Sphere</span>
        <span className="ml-auto"><Svg><path d="m9.500 1.500 5 5-1.500.5-2.500 2.500.5 3-7.500-7.500 3 .5L9 3zM6 10l-5 5.500" stroke="#999" /></Svg></span>
      </div>
      <div className="flex flex-1 overflow-hidden bg-[#424242]">
        <div className="flex w-7 shrink-0 flex-col gap-[2px] bg-[#222] pl-[2px] pt-[9px]">
          {PROP_ICONS.map((ic, i) => (
            <div
              key={i}
              className={`flex h-[26px] shrink-0 items-center justify-center rounded-l-[4px] ${i === 7 ? "bg-[#424242]" : "bg-[#2b2b2b]"} ${i === 1 || i === 6 ? "mt-2" : ""}`}
            >
              {ic}
            </div>
          ))}
        </div>
        <Btn className="ml-[9px] mt-[9px] w-[286px] justify-between pl-[5px] pr-[1px]">Add Modifier <Chev /></Btn>
      </div>
    </div>
  );
}

/* ---------- timeline ---------- */

function Timeline() {
  const frames = Array.from({ length: 17 }, (_, i) => (i + 1) * 10);
  return (
    <div className="relative ml-px mt-[3px] h-[72px] w-[1584px] overflow-hidden rounded-[5px] bg-[#2b2b2b]">
      <div className="flex h-[25px] items-center bg-[#383838] pl-[7px] pt-px text-[#d8d8d8]">
        <Btn className="w-[31px] justify-between pl-[3px] pr-[2px]">
          <Svg><circle cx="8" cy="8" r="7" fill="#e6e6e6" stroke="none" /><path d="M9.500 3 8 8l3 3.500" stroke="#333" strokeWidth="1.800" /></Svg>
          <Chev />
        </Btn>
        <div className="ml-[6px] flex h-[20px] items-center rounded-[4px] border border-[#444] bg-[#2e2e2e]">
          <span className="flex h-full w-[68px] items-center justify-between border-r border-[#444] pl-[7px] pr-[1px]">Playback <Chev /></span>
          <span className="flex h-full w-[58px] items-center justify-between pl-[8px] pr-[1px]">Keying <Chev /></span>
        </div>
        <span className="ml-[9px]">View</span>
        <span className="ml-[16px]">Marker</span>
        <div className="ml-[518px] flex h-[18px] gap-px overflow-hidden rounded-r-[4px] bg-[#333]">
          {["M13 2v12L4 8z", "M4 2v12L14 8z", "M1 3v10L7 8v5l2-2 2 2 5-5-5-5-2 5-2-5z", "M3 4v8l6-4zM11 2h2v12h-2z"].map((d) => (
            <span key={d} className="flex w-[19px] items-center justify-center bg-[#585858]"><Svg><path d={d} fill="#eee" stroke="none" /></Svg></span>
          ))}
        </div>
      </div>
      <svg className="block" width="1584" height="47" viewBox="1 971 1584 47">
        <rect x="1" y="994" width="57" height="24" fill="#353535" />
        <rect x="58" y="994" width="1530" height="24" fill="#424242" />
        <path d={frames.map((f) => `M${112.5 + (f / 10 - 1) * 58.93} 994v24`).join("")} stroke="#2a2a2a" />
        <path d={frames.map((f) => `M${82.5 + (f / 10 - 1) * 58.93} 994v24`).join("")} stroke="#383838" />
        <path d="M23.500 994v24M53.500 994v24" stroke="#2d2d2d" />
        <rect x="57.500" y="990" width="2" height="28" fill="#5680c2" />
        <rect x="9" y="1008" width="1600" height="8.500" rx="4" fill="#696969" />
        <circle cx="13" cy="1012" r="3.500" fill="#5a5a5a" stroke="#333" />
        <rect x="45.500" y="973.500" width="26" height="18" rx="4" fill="#5680c2" stroke="#6a90cc" strokeWidth=".6" />
        <rect x="1" y="985" width="6" height="14" rx="2" fill="#222" />
        <path d="m2 988 3.500 4L2 996" fill="none" stroke="#999" />
        <g fill="#aaa" fontSize="11.500" fontFamily="DejaVu Sans Condensed, DejaVu Sans, sans-serif" textAnchor="middle">
          <text x="58.500" y="987" fill="#fff">1</text>
          {frames
            .filter((f) => f <= 30 || f >= 130)
            .map((f) => (
              <text key={f} x={111 + (f / 10 - 1) * 58.93} y="987">{f}</text>
            ))}
        </g>
      </svg>
    </div>
  );
}

function Mouse({ d }: { d: string }) {
  return (
    <svg width="12" height="16" viewBox="0 0 12 16" fill="none" stroke="#bdbdbd" className="shrink-0">
      <rect x=".8" y=".8" width="10.400" height="14.400" rx="3" strokeWidth="1.200" />
      <path d={d} fill="#bdbdbd" stroke="none" />
    </svg>
  );
}

function StatusBar() {
  return (
    <div className="mt-px flex h-[21px] items-center bg-[#303030] pl-[11px] pt-px text-[11.100px] text-[#a8a8a8]">
      <div className="flex w-[236px] items-center gap-[11px]"><Mouse d="M1 8V4q0-3 3-3h2v7z" />Select</div>
      <div className="flex w-[236px] items-center gap-[11px]"><Mouse d="M4.700 3h2.600v5H4.700z" />Center View to Mouse</div>
      <Mouse d="M11 8V4q0-3-3-3H6v7z" />
    </div>
  );
}

/* ---------- flat / smooth example ---------- */

const L = [[205, 447], [235, 480], [272, 535], [300, 600], [330, 680], [350, 772], [367, 865], [377, 950]];
const R = [[605, 250], [640, 275], [672, 318], [703, 380], [727, 440], [745, 515], [762, 600], [768, 680]];
const STRIPS = ["#858786", "#868787", "#838486", "#7f8082", "#75767a", "#6b6c6f", "#5f5f5f"];

function Example() {
  return (
    <svg className="absolute left-[1063px] top-[677px] bg-[#393939]" width="857" height="373" viewBox="1063 677 857 373">
      <defs>
        <radialGradient id="glow" gradientUnits="userSpaceOnUse" cx="0" cy="0" r="1" gradientTransform="translate(1090 655) scale(370 620)">
          <stop offset="0" stopColor="#bdbfbe" />
          <stop offset=".12" stopColor="#b7b9b8" />
          <stop offset=".4" stopColor="#a1a3a3" />
          <stop offset=".7" stopColor="#8a8c8b" />
          <stop offset="1" stopColor="#6f7170" />
        </radialGradient>
        <filter id="b1" x="-20%" y="-20%" width="140%" height="140%"><feGaussianBlur stdDeviation="24 26" /></filter>
        <filter id="b2" x="-40%" y="-20%" width="180%" height="140%"><feGaussianBlur stdDeviation="16 24" /></filter>
        <filter id="b3" x="-150%" y="-80%" width="400%" height="260%"><feGaussianBlur stdDeviation="40 70" /></filter>
        <path id="smooth" d="M827 402 1120 222 1300 288 1345 315 1385 355 1415 402 1450 485 1472 565 1484 650 1485 720 1477 850 1470 1052 1405 1142H892L842 1100 832 680Z" />
        <clipPath id="smoothClip"><use href="#smooth" /></clipPath>
      </defs>
      <g fill="none" stroke="#484848" strokeWidth="1.200">
        <path d={gridPath(SIDE, range(-5, 22, [6]), "u", 30)} />
        <path d={gridPath(SIDE, range(-7, 12, [3]), "v", 30)} />
        <path stroke="#525252" d={gridPath(SIDE, [3], "v", 30)} />
      </g>
      <path d="M1353.400 676.700 1920 810" stroke="#8c3a49" strokeWidth="1.500" />
      <g transform="translate(1060 670) scale(.5485 .33333)">
        <path d="M83 360 478 190 605 250 762 600 777 1003 625 1142H228L147 1050Z" fill="#555" />
        <path d="M377 950 768 680 777 1003 625 1142H388Z" fill="#555" />
        <path d="M83 360 478 190 605 250 205 447Z" fill="#858688" />
        {STRIPS.map((c, i) => (
          <path key={i} d={`M${L[i]}L${R[i]}L${R[i + 1]}L${L[i + 1]}Z`} fill={c} stroke={c} strokeWidth=".6" />
        ))}
        <path d="M83 360 205 447 235 480 272 535 300 600 330 680 350 772 367 865 377 950 388 1142H228L147 1050Z" fill="#909291" />
        <g fill="none" stroke="#6f706f" strokeOpacity=".5" strokeWidth="2">
          <path d="M115 720 150 697M95 760 205 860 350 1003 490 1142M125 910 280 812" />
          <path d="M205 1110 350 1003 575 837 765 690M515 790 575 837 775 975" strokeOpacity=".35" />
        </g>
        <path d="M83 360 478 190 605 250 640 275 672 318 703 380 727 440 745 515 762 600 768 680 772 830 777 1003 625 1142M228 1142 147 1050 83 360" fill="none" stroke="#ef972b" strokeWidth="2" vectorEffect="non-scaling-stroke" />
        <g clipPath="url(#smoothClip)">
          <rect x="800" y="200" width="700" height="950" fill="#3a3839" />
          <path d="M1000 180h180l160 90-120 30-250-30z" fill="#2a2a2c" filter="url(#b2)" />
          <path d="M700 440 760 385 940 328 1130 340 1270 338 1340 395 1382 480 1402 570 1406 690 1398 790 1378 900 1345 1020 1310 1260H700Z" fill="url(#glow)" filter="url(#b1)" />
          <path d="M800 400 1000 290 1060 300 1010 340 900 390Z" fill="#7b7d7c" fillOpacity=".7" filter="url(#b2)" />
          <ellipse cx="815" cy="1150" rx="45" ry="230" fill="#3c3e3d" fillOpacity=".75" filter="url(#b3)" />
          <ellipse cx="1392" cy="1060" rx="26" ry="110" fill="#4f4640" fillOpacity=".8" filter="url(#b2)" />
          <g fill="none" stroke="#777978" strokeOpacity=".5" strokeWidth="2">
            <path d="M990 775 860 880M845 740 945 812 1157 948 1420 1120M1200 905 1020 1085M1365 822 1485 887" />
          </g>
        </g>
        <path d="M892 1142 842 1100 832 680 827 402 1120 222 1300 288 1345 315 1385 355 1415 402 1450 485 1472 565 1484 650 1485 720 1477 850 1470 1052 1405 1142" fill="none" stroke="#dd5309" strokeWidth="2" vectorEffect="non-scaling-stroke" />
      </g>
      <circle cx="1303.500" cy="902.700" r="2.700" fill="#f59b25" stroke="#222" />
      <circle cx="1697.300" cy="917.300" r="2.700" fill="#e8560b" stroke="#222" />
    </svg>
  );
}

/* ---------- notes over the window ---------- */

function Note({ children, className = "" }: P) {
  return (
    <div className={`absolute whitespace-nowrap bg-white font-['Open_Sans','Noto_Sans',sans-serif] text-[35px] leading-[49px] text-[#ed1c24] [font-stretch:normal] ${className}`}>
      {children}
    </div>
  );
}

export default function App() {
  return (
    <div className="relative h-[1050px] w-[1920px] overflow-hidden bg-black font-['DejaVu_Sans_Condensed','DejaVu_Sans',sans-serif] text-[11px] leading-none text-[#e0e0e0] [font-stretch:condensed]">
      <div className="flex h-[1040px] flex-col bg-[#1f1f1f]">
        <TitleBar />
        <TopBar />
        <div className="flex h-[892px]">
          <div className="ml-px flex w-[1584px] flex-col overflow-hidden rounded-[5px]">
            <ToolHeader />
            <div className="relative flex-1 bg-[#393939]">
              <Viewport />
              <ModeHeader />
              <div className="absolute left-[76px] top-[33px] text-[11.100px] leading-5 text-white [text-shadow:1px_1px_2px_#000]">
                <p>User Perspective</p>
                <p>(1) Collection | Sphere</p>
              </div>
              <Toolbar />
              <Gizmo />
              <NavButtons />
              <SideTabs />
              <TransformPanel />
            </div>
          </div>
          <div className="ml-[3px] flex h-[626px] w-[331px] flex-col">
            <Outliner />
            <Properties />
          </div>
        </div>
        <Timeline />
        <StatusBar />
      </div>
      <div className="absolute left-[667px] top-[1040px] h-[10px] w-[396px] bg-white">
        <span className="absolute left-[6px] top-0 h-px w-[4px] bg-[#ed1c24]" />
        <span className="absolute left-[56px] top-0 h-px w-[4px] bg-[#ed1c24]" />
      </div>
      <Example />
      <ContextMenu />
      <Note className="left-[417px] top-0 h-[60px] w-[818px] tracking-[-0.140px]"><p>Визуальное сглаживание, не реальное!</p></Note>
      <Note className="left-[268px] top-[193px] h-[101px] w-[951px] tracking-[-0.080px]">
        <p>В режиме объекта нажмите ПКМ и выберит Shade</p>
        <p>Smooth</p>
      </Note>
      <Note className="left-[1166px] top-[563px] h-[54px] w-[342px] tracking-[-0.500px]"><p>Вернуть обратно</p></Note>
      <Note className="left-[267px] top-[932px] h-[58px] w-[517px]"><p>Пример с другим объектом</p></Note>
      <svg className="absolute inset-0" width="1920" height="1050" fill="none" stroke="#ed1c24" strokeWidth="5" strokeLinecap="round">
        <path d="M58 96 267 191" />
        <path d="M836.500 294.500V446" />
        <path d="M920 476 1166 575" />
        <path d="M769 956.500h90l1 1h181l1 1h91" />
      </svg>
    </div>
  );
}
